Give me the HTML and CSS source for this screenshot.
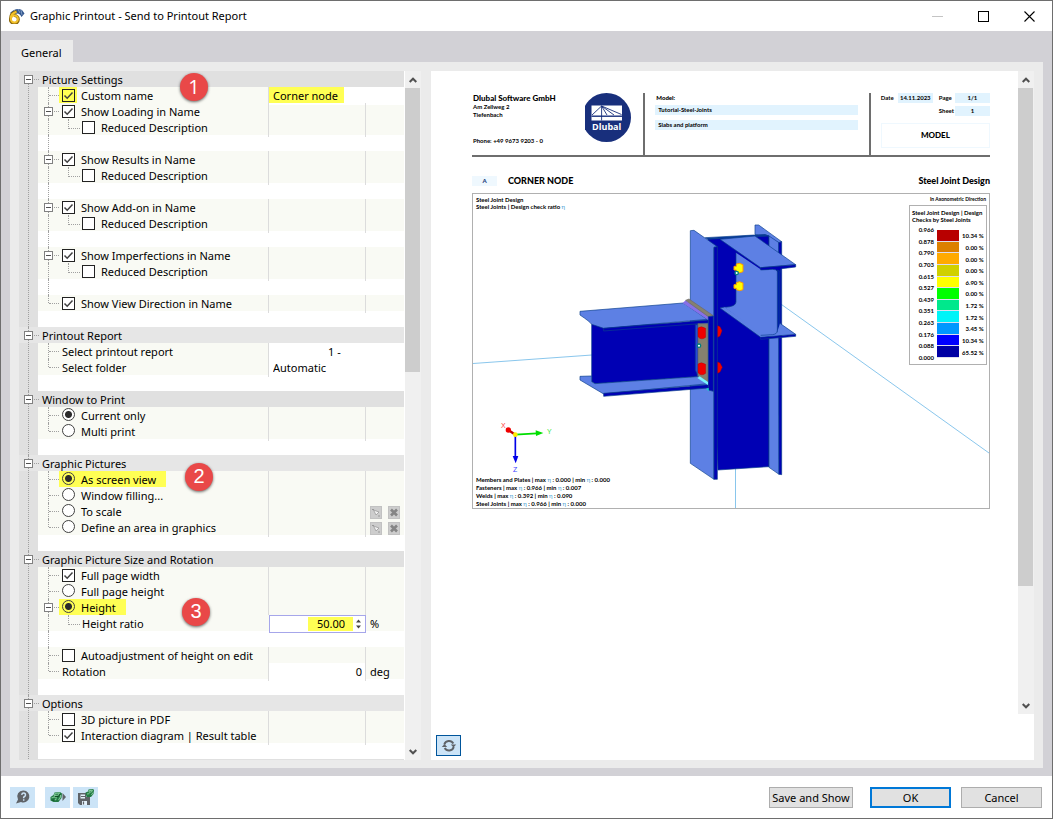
FILE: index.html
```html
<!DOCTYPE html>
<html lang="en">
<head>
<meta charset="utf-8">
<title>Graphic Printout - Send to Printout Report</title>
<link rel="stylesheet" href="styles.css">
</head>
<body>
<div class="window">
  <header class="titlebar">
    <svg class="app-icon" viewBox="0 0 16 16" aria-hidden="true">
      <path d="M1 5 Q7 -1 13 2 L15.500 5.500 L12.500 9 Q10 3 4 7 Z" fill="#33578f"/>
      <path d="M5 2 L8 5 M9 1 L11 5 M12 2 L13 7" stroke="#9db6d8" stroke-width=".7"/>
      <path d="M7.500 3.500 Q1.500 5 1.500 10.500 A4 4 0 1 0 5 7.500" fill="none" stroke="#8d6a10" stroke-width="3"/>
      <path d="M7.500 3.800 Q2 5.500 1.700 10.500" fill="none" stroke="#f4c22a" stroke-width="2"/>
      <circle cx="5.400" cy="11" r="3.500" fill="none" stroke="#f4c22a" stroke-width="2"/>
    </svg>
    <h1>Graphic Printout - Send to Printout Report</h1>
    <div class="window-buttons">
      <button type="button" aria-label="Minimize" disabled><svg viewBox="0 0 11 11"><path d="M0 5.500H11" stroke="#c4c4c4"/></svg></button>
      <button type="button" aria-label="Maximize"><svg viewBox="0 0 11 11"><rect x=".5" y=".5" width="10" height="10" fill="none" stroke="#000"/></svg></button>
      <button type="button" aria-label="Close"><svg viewBox="0 0 11 11"><path d="M.5 .5L10.500 10.500M10.500 .5L.5 10.500" stroke="#000" stroke-width="1.100"/></svg></button>
    </div>
  </header>

  <main class="workspace">
    <nav class="tabs"><button type="button" class="tab">General</button></nav>
    <div class="panel">
      <div class="tree">
        <form class="grid">
          <section class="group">
            <h2><button type="button" class="toggle" aria-label="Collapse"></button>Picture Settings</h2>
            <div class="row wide"><label class="name branch"><span class="mark box"><input type="checkbox" checked></span>Custom name<b class="badge first">1</b></label><span class="value edit"><input class="text mark" type="text" value="Corner node" aria-label="Custom name value"></span></div>
            <div class="row"><div class="name branch"><button type="button" class="toggle" aria-label="Collapse"></button><label><input type="checkbox" checked>Show Loading in Name</label></div><span class="value"></span><span class="unit"></span></div>
            <div class="row"><label class="name sub"><input type="checkbox">Reduced Description</label><span class="value"></span><span class="unit"></span></div>
            <div class="spacer line"></div>
            <div class="row"><div class="name branch"><button type="button" class="toggle" aria-label="Collapse"></button><label><input type="checkbox" checked>Show Results in Name</label></div><span class="value"></span><span class="unit"></span></div>
            <div class="row"><label class="name sub"><input type="checkbox">Reduced Description</label><span class="value"></span><span class="unit"></span></div>
            <div class="spacer line"></div>
            <div class="row"><div class="name branch"><button type="button" class="toggle" aria-label="Collapse"></button><label><input type="checkbox" checked>Show Add-on in Name</label></div><span class="value"></span><span class="unit"></span></div>
            <div class="row"><label class="name sub"><input type="checkbox">Reduced Description</label><span class="value"></span><span class="unit"></span></div>
            <div class="spacer line"></div>
            <div class="row"><div class="name branch"><button type="button" class="toggle" aria-label="Collapse"></button><label><input type="checkbox" checked>Show Imperfections in Name</label></div><span class="value"></span><span class="unit"></span></div>
            <div class="row"><label class="name sub"><input type="checkbox">Reduced Description</label><span class="value"></span><span class="unit"></span></div>
            <div class="spacer line"></div>
            <div class="row"><label class="name branch last"><input type="checkbox" checked>Show View Direction in Name</label><span class="value"></span><span class="unit"></span></div>
            <div class="spacer"></div>
          </section>

          <section class="group">
            <h2><button type="button" class="toggle" aria-label="Collapse"></button>Printout Report</h2>
            <div class="row wide"><label class="name branch" for="report">Select printout report</label><span class="value edit"><select id="report" class="report"><option>1 -</option></select></span></div>
            <div class="row wide"><label class="name branch last" for="folder">Select folder</label><span class="value edit"><select id="folder"><option>Automatic</option></select></span></div>
            <div class="spacer"></div>
          </section>

          <section class="group">
            <h2><button type="button" class="toggle" aria-label="Collapse"></button>Window to Print</h2>
            <div class="row"><label class="name branch"><input type="radio" name="window" checked>Current only</label><span class="value"></span><span class="unit"></span></div>
            <div class="row"><label class="name branch last"><input type="radio" name="window">Multi print</label><span class="value"></span><span class="unit"></span></div>
            <div class="spacer"></div>
          </section>

          <section class="group">
            <h2><button type="button" class="toggle" aria-label="Collapse"></button>Graphic Pictures</h2>
            <div class="row"><div class="name branch"><label class="mark"><input type="radio" name="picture" checked>As screen view</label><b class="badge second">2</b></div><span class="value"></span><span class="unit"></span></div>
            <div class="row"><label class="name branch"><input type="radio" name="picture">Window filling...</label><span class="value"></span><span class="unit"></span></div>
            <div class="row"><label class="name branch"><input type="radio" name="picture">To scale</label><span class="value"></span><span class="unit tools"><button type="button" aria-label="Pick" disabled><svg viewBox="0 0 12 13"><path d="M3.500 4L9 6 6 9Z" fill="#f2f2f2" stroke="#9a9a9a" stroke-width=".8"/><path d="M2 3.500H4M8 10H10" fill="none" stroke="#999"/></svg></button><button type="button" aria-label="Clear" disabled><svg viewBox="0 0 12 13"><path d="M3 3.500L9 9.500M9 3.500L3 9.500" stroke="#858585" stroke-width="2.600"/></svg></button></span></div>
            <div class="row"><label class="name branch last"><input type="radio" name="picture">Define an area in graphics</label><span class="value"></span><span class="unit tools"><button type="button" aria-label="Pick" disabled><svg viewBox="0 0 12 13"><path d="M3.500 4L9 6 6 9Z" fill="#f2f2f2" stroke="#9a9a9a" stroke-width=".8"/><path d="M2 3.500H4M8 10H10" fill="none" stroke="#999"/></svg></button><button type="button" aria-label="Clear" disabled><svg viewBox="0 0 12 13"><path d="M3 3.500L9 9.500M9 3.500L3 9.500" stroke="#858585" stroke-width="2.600"/></svg></button></span></div>
            <div class="spacer"></div>
          </section>

          <section class="group">
            <h2><button type="button" class="toggle" aria-label="Collapse"></button>Graphic Picture Size and Rotation</h2>
            <div class="row"><label class="name branch"><input type="checkbox" checked>Full page width</label><span class="value"></span><span class="unit"></span></div>
            <div class="row"><label class="name branch"><input type="radio" name="size">Full page height</label><span class="value"></span><span class="unit"></span></div>
            <div class="row"><div class="name branch"><button type="button" class="toggle" aria-label="Collapse"></button><label class="mark"><input type="radio" name="size" checked>Height</label><b class="badge third">3</b></div><span class="value"></span><span class="unit"></span></div>
            <div class="row"><label class="name sub" for="ratio">Height ratio</label><span class="value spin"><input id="ratio" class="mark" type="text" inputmode="decimal" value="50.00"><svg viewBox="0 0 5 10" aria-hidden="true"><path d="M0 3.500L2.500 .5 5 3.500ZM0 6.500L2.500 9.500 5 6.500Z" fill="#444"/></svg></span><span class="unit">%</span></div>
            <div class="spacer line"></div>
            <div class="row"><label class="name branch"><input type="checkbox">Autoadjustment of height on edit</label><span class="value"></span><span class="unit"></span></div>
            <div class="row"><label class="name branch last" for="rotation">Rotation</label><span class="value edit"><input id="rotation" class="text number" type="text" value="0"></span><span class="unit">deg</span></div>
            <div class="spacer"></div>
          </section>

          <section class="group">
            <h2><button type="button" class="toggle" aria-label="Collapse"></button>Options</h2>
            <div class="row"><label class="name branch"><input type="checkbox">3D picture in PDF</label><span class="value"></span><span class="unit"></span></div>
            <div class="row"><label class="name branch last"><input type="checkbox" checked>Interaction diagram | Result table</label><span class="value"></span><span class="unit"></span></div>
            <div class="spacer"></div>
          </section>
        </form>
        <div class="scrollbar">
          <button type="button" aria-label="Scroll up"><svg viewBox="0 0 8 6"><path d="M.7 5L4 1.700 7.300 5" fill="none" stroke="#505050" stroke-width="2"/></svg></button>
          <div class="track"><div class="thumb tree-thumb"></div></div>
          <button type="button" aria-label="Scroll down"><svg viewBox="0 0 8 6"><path d="M.7 1L4 4.300 7.300 1" fill="none" stroke="#505050" stroke-width="2"/></svg></button>
        </div>
      </div>

      <div class="preview">
        <div class="preview-view">
          <article class="page">
            <header class="page-head">
              <div class="company">
                <address><strong>Dlubal Software GmbH</strong><span>Am Zellweg 2</span><span>Tiefenbach</span><span class="phone">Phone: +49 9673 9203 - 0</span></address>
                <svg class="logo" viewBox="0 0 46 49" role="img" aria-label="Dlubal">
                  <ellipse cx="21.500" cy="24.500" rx="24.500" ry="24.500" fill="#182f7c"/>
                  <path d="M6.500 12.500H37V27.500H6.500Z" fill="#fff"/>
                  <path d="M6.500 23.200H37" stroke="#182f7c" stroke-width="1.400"/>
                  <path d="M16.600 13V27.500M16.600 13L7 22M16.600 13L22 22M16.600 13L29 22M16.600 13L36.500 21.500" stroke="#182f7c" stroke-width=".9" fill="none"/>
                  <text x="21.700" y="36.500" text-anchor="middle">Dlubal</text>
                </svg>
              </div>
              <div class="model"><strong>Model:</strong><span>Tutorial-Steel-Joints</span><span>Slabs and platform</span></div>
              <div class="meta">
                <dl><dt>Date</dt><dd>14.11.2023</dd><dt>Page</dt><dd>1/1</dd><dt class="sheet">Sheet</dt><dd>1</dd></dl>
                <strong>MODEL</strong>
              </div>
            </header>
            <div class="page-title"><span class="index">A</span><h3>CORNER NODE</h3><h3 class="right">Steel Joint Design</h3></div>
            <figure class="graphic">
              <svg class="scene" viewBox="0 0 516 314" role="img" aria-label="Steel joint, axonometric view">
                <g stroke="#7cc0ea" stroke-width=".9" fill="none"><path d="M0 169.500L119 161M305 108L516 259M262.500 274V314"/></g>
                <g transform="translate(97 16) scale(.33333)" stroke="#0a3f8c" stroke-width="2" stroke-linejoin="round">
                  <path d="M555 45H566L635 95L627 98L555 73Z" fill="#5d80e4"/>
                  <path d="M414 87L585 74 597 78V770L444 780Z" fill="#0000b4"/>
                  <path d="M597 78L627 98V793L597 772Z" fill="#5d80e4"/>
                  <path d="M626 98L635 95V794L627 793Z" fill="#0000b4"/>
                  <path d="M361 62L372 61 442 110 432 112V808L361 760Z" fill="#5d80e4"/>
                  <path d="M432 112L442 110V808H432Z" fill="#0000b4"/>
                  <path d="M406 83L555 75 585 74 597 78 414 88Z" fill="#073b9b"/>
                  <path d="M498 128L575 180 620 178V372L574 375L464 292 Q498 290 498 276Z" fill="#5d80e4" stroke="none"/>
                  <path d="M464 292Q498 290 498 276V128" fill="none"/>
                  <path d="M450 88L555 78 677 164 572 173Z" fill="#5d80e4"/>
                  <path d="M572 173L677 164V171L635 176Q630 178 630 188L622 184Q619 178 608 178L572 180Z" fill="#0000b4"/>
                  <path d="M622 180L630 184V370L622 365Z" fill="#0020a8"/>
                  <path d="M450 294L464 291 565 363 608 376 622 365 630 340 677 373 572 382Z" fill="#5d80e4" stroke="none"/>
                  <path d="M464 291L450 294 572 382M630 340L677 373M572 376L608 374Q622 372 622 362" fill="none"/>
                  <path d="M572 382L677 373V379L572 388Z" fill="#0000b4"/>
                  <path d="M65 343L382 342V500L75 521 65 515Z" fill="#0000b4"/>
                  <path d="M65 343Q60 335 30 315V304L340 279 412 328 101 355Z" fill="#5d80e4"/>
                  <path d="M101 355L415 330V339L101 363Z" fill="#0000b4"/>
                  <path d="M30 499L65 498V515L75 521 382 500 415 521 101 552 30 510Z" fill="#5d80e4"/>
                  <path d="M101 550L415 524V534L101 559Z" fill="#0000b4"/>
                  <path d="M376 344H384V498L376 480Z" fill="#2848d8"/>
                  <path d="M384 341H415V520L384 498Z" fill="#86816f" stroke="#5d6378"/>
                  <path d="M338 279L347 271 415 318V330Z" fill="#8770e8" stroke="none"/>
                  <path d="M347 271L357 267 430 317 415 320Z" fill="#86816f" stroke="#6b6868"/>
                  <path d="M415 320L430 318V544L415 540Z" fill="#0000b4"/>
                  <path d="M382 504L389 499 414 516V525Z" fill="#79f3ff" stroke="none"/>
                  <path d="M408 536L416 534V544Z" fill="#16d6cf" stroke="none"/>
                  <g fill="#f00000" stroke="#a80000" stroke-width="1">
                    <path d="M384 354Q394 346 407 355V382Q394 392 384 380Z"/><path d="M384 462Q394 454 407 463V490Q394 500 384 488Z"/>
                    <path d="M443 347L450 350 456 362 450 378 443 382Z"/><path d="M443 456L450 459 457 472 450 486 443 490Z"/>
                  </g>
                  <g fill="#ffff00" stroke="#ff9900" stroke-width="3">
                    <path d="M492 169H499V162L509 160 519 164V185L509 188 499 185V180H492Z"/><path d="M492 224H499V218L509 215 519 219V239L509 242 499 239V235H492Z"/>
                  </g>
                  <circle cx="500" cy="189" r="5" fill="#fff" stroke="#008080" stroke-width="4"/><circle cx="387" cy="407" r="5" fill="#fff" stroke="#008080" stroke-width="4"/>
                </g>
                <g transform="translate(-8 206) scale(.33333)">
                  <path d="M151 104L130 90" stroke="#b80000" stroke-width="7"/><circle cx="130" cy="90" r="8" fill="#f00000"/>
                  <path d="M151 104L215 100" stroke="#00dd00" stroke-width="5"/><path d="M212 91L235 99 213 108Z" fill="#00e000"/>
                  <path d="M151 104V170" stroke="#0000e8" stroke-width="5"/><path d="M143 168H160L152 190Z" fill="#0000e8"/>
                  <circle cx="151" cy="104" r="7" fill="#ffee00"/>
                </g>
                <g class="axes"><text x="28" y="234" fill="#ff4040">X</text><text x="74" y="240" fill="#40e840">Y</text><text x="40" y="278" fill="#4040ff">Z</text></g>
              </svg>
              <figcaption class="note top">Steel Joint Design<br>Steel Joints | Design check ratio <i>η</i></figcaption>
              <p class="note direction">In Axonometric Direction</p>
              <p class="note bottom">Members and Plates | max <i>η</i> : 0.000 | min <i>η</i> : 0.000<br>Fasteners | max <i>η</i> : 0.966 | min <i>η</i> : 0.007<br>Welds | max <i>η</i> : 0.392 | min <i>η</i> : 0.090<br>Steel Joints | max <i>η</i> : 0.966 | min <i>η</i> : 0.000</p>
              <div class="legend">
                <p>Steel Joint Design | Design<br>Checks by Steel Joints</p>
                <div class="scale">
                  <ol class="limits"><li>0.966</li><li>0.878</li><li>0.790</li><li>0.703</li><li>0.615</li><li>0.527</li><li>0.439</li><li>0.351</li><li>0.263</li><li>0.176</li><li>0.088</li><li>0.000</li></ol>
                  <div class="bars"><i class="c1"></i><i class="c2"></i><i class="c3"></i><i class="c4"></i><i class="c5"></i><i class="c6"></i><i class="c7"></i><i class="c8"></i><i class="c9"></i><i class="c10"></i><i class="c11"></i></div>
                  <ol class="shares"><li>10.34 %</li><li>0.00 %</li><li>0.00 %</li><li>0.00 %</li><li>6.90 %</li><li>0.00 %</li><li>1.72 %</li><li>1.72 %</li><li>3.45 %</li><li>10.34 %</li><li>65.52 %</li></ol>
                </div>
              </div>
            </figure>
          </article>
          <div class="scrollbar">
            <button type="button" aria-label="Scroll up"><svg viewBox="0 0 8 6"><path d="M.7 5L4 1.700 7.300 5" fill="none" stroke="#505050" stroke-width="2"/></svg></button>
            <div class="track"><div class="thumb page-thumb"></div></div>
            <button type="button" aria-label="Scroll down"><svg viewBox="0 0 8 6"><path d="M.7 1L4 4.300 7.300 1" fill="none" stroke="#505050" stroke-width="2"/></svg></button>
          </div>
        </div>
        <div class="preview-bar">
          <button type="button" class="icon-button active" aria-label="Refresh"><svg viewBox="0 0 16 16"><path d="M3.300 6.500A4.900 4.900 0 0 1 12.300 5.500M12.700 9A4.900 4.900 0 0 1 3.700 10" fill="none" stroke="#5f6368" stroke-width="2"/><path d="M9.800 6.500H15.200L12.500 9.500ZM.8 9H6.200L3.500 6Z" fill="#5f6368"/></svg></button>
        </div>
      </div>
    </div>
  </main>

  <footer class="footer">
    <button type="button" class="icon-button help" aria-label="Help"><svg viewBox="0 0 16 16"><path d="M8.500 1.500A6 6 0 1 1 6 13L1 14.500 3 10.500A6 6 0 0 1 8.500 1.500Z" fill="#5f6368"/><path d="M6.700 5.800Q7 4 8.700 4T10.500 6Q10.500 7 8.700 8.200V9.300M8.700 10.300V11.800" fill="none" stroke="#cce4f7" stroke-width="1.500"/></svg></button>
    <button type="button" class="icon-button" aria-label="Load settings"><svg viewBox="0 0 16 16"><path d="M.5 8L3.500 6 4.500 3.500 10 3 12 4.500 11.500 9 8.500 13 3.500 13 .5 11.500Z" fill="#237a43"/><path d="M5 4.500L9.500 4 8.500 6 4.500 6.500ZM1.500 9L4 8 7 8.300M5 11L6.500 9.500M8.500 11L10.500 8V6" fill="none" stroke="#7cc493" stroke-width="1.100"/><path d="M5 7.500H8.500L10 5M3 10.500V12" fill="none" stroke="#0f4422" stroke-width=".9"/><path d="M12.500 4L16 8 12.500 12Z" fill="#5f6368"/></svg></button>
    <button type="button" class="icon-button" aria-label="Save settings"><svg viewBox="0 0 16 16"><path d="M0 4H8V8H12V16H2L0 14Z" fill="#5f6368"/><path d="M2.500 5.500H7V9.500H2.500ZM4 12H9V16H4Z" fill="#e4f1fb"/><path d="M3 7.500H7M5.500 12.500V15.500" stroke="#5f6368" stroke-width="1.200"/><path d="M7.500 3.500L10 2.500 10.500 .5 15 0 16 1 15.500 5 13 8 8.500 8Z" fill="#237a43"/><path d="M11 1.700L14.500 1.200 13.500 3 11 3.200ZM9 5L11.500 4.700M13.500 6L15 3.500" fill="none" stroke="#86cc9c"/></svg></button>
    <span class="fill"></span>
    <button type="button" class="push save">Save and Show</button>
    <button type="button" class="push default">OK</button>
    <button type="button" class="push">Cancel</button>
  </footer>
</div>
</body>
</html>
```
FILE: styles.css
```css
* { box-sizing: border-box; }
body { margin: 0; font: 11px/16px "Noto Sans", "Open Sans", sans-serif; color: #000; background: #fff; }
button, input, select { font: inherit; color: inherit; margin: 0; padding: 0; border: 0; border-radius: 0; }
button { background: none; display: flex; align-items: center; justify-content: center; }
h1, h2, h3, p, ol, dl, dd, figure { margin: 0; padding: 0; font: inherit; }
ol { list-style: none; }

.window { min-height: 100vh; display: flex; flex-direction: column; border: 1px solid #6e6e6e; background: #fff; }
.titlebar { height: 30px; display: flex; align-items: center; padding-left: 8px; gap: 5px; }
.titlebar h1 { flex: 1; }
.app-icon { width: 16px; height: 16px; }
.window-buttons { display: flex; }
.window-buttons button { width: 46px; height: 28px; }
.window-buttons svg { width: 11px; height: 11px; }

.workspace { flex: 1; display: flex; flex-direction: column; background: #d2d1d6; padding: 9px 9px 8px; }
.tabs { display: flex; }
.tab { height: 22px; padding: 3px 11px 0; background: #ebebeb; }
.panel { flex: 1; display: grid; grid-template-columns: minmax(380px, 402fr) 603fr; gap: 10px; background: #ebebeb; padding: 9px 9px 8px; }

.tree { display: flex; background: #fff; min-width: 0; }
.grid { flex: 1; position: relative; padding-left: 19px; margin-right: 1px; border-bottom: 1px solid #e0e0e0; background: linear-gradient(to right, #e0e0e0 19px, #fff 19px); }
.grid::before { content: ""; position: absolute; left: 9px; top: 8px; bottom: 0; border-left: 1px dotted #a0a0a0; }
.group { position: relative; }
.group h2 { position: relative; height: 16px; padding: 1px 0 0 23px; margin-left: -19px; background: #e0e0e0; }
.group:nth-child(even) h2 { background: #e6e6e6; }
.group h2::after { content: ""; position: absolute; left: 15px; top: 8px; width: 5px; border-top: 1px dotted #a0a0a0; }
.group h2::before { content: ""; position: absolute; left: 9px; top: 0; height: 16px; border-left: 1px dotted #a0a0a0; }
.group:first-child h2::before { top: 8px; height: 8px; }
.toggle { position: absolute; left: 5px; top: 4px; width: 9px; height: 9px; border: 1px solid #808080; background: #fff; z-index: 1; }
.toggle::before { content: ""; width: 5px; height: 1px; background: #505050; }

.row { display: grid; grid-template-columns: 1fr 97px 39px; height: 16px; background: #f9faf4; }
.row.wide { grid-template-columns: 1fr 136px; }
.name { position: relative; display: flex; align-items: flex-start; padding-left: 24px; line-height: 18px; white-space: nowrap; }
.name label { display: flex; align-items: flex-start; }
.name .toggle { left: 6px; }
.name.sub { padding-left: 44px; }
.name::before, .line::before { content: ""; position: absolute; left: 10px; top: 0; height: 16px; border-left: 1px dotted #a0a0a0; }
.name.last::before { height: 8px; }
.name::after { content: ""; position: absolute; left: 11px; top: 8px; width: 10px; border-top: 1px dotted #a0a0a0; }
.name.sub::after { left: 30px; top: 0; width: 11px; height: 9px; border-top: 0; border-left: 1px dotted #a0a0a0; border-bottom: 1px dotted #a0a0a0; }
.spacer { position: relative; height: 16px; }
.value { display: flex; border-left: 1px solid #dcdcdc; min-width: 0; }
.value.edit { background: #fff; }
.unit { border-left: 1px solid #dcdcdc; padding: 1px 0 0 4px; }

input[type="checkbox"], input[type="radio"] { appearance: none; flex: none; width: 13px; height: 13px; margin: 2px 6px 0 0; border: 1px solid #222; background: #fff; }
input[type="checkbox"]:checked { background: #fff url("data:image/svg+xml,%3Csvg xmlns='http://www.w3.org/2000/svg' viewBox='0 0 11 11'%3E%3Cpath d='M1.500 5.500L4.200 8.200L9.500 2.500' fill='none' stroke='%23404040' stroke-width='1.500'/%3E%3C/svg%3E"); }
input[type="radio"] { margin-top: 1px; border-radius: 50%; border-color: #404040; }
input[type="radio"]:checked { background: radial-gradient(circle, #2b2b2b 3px, transparent 4px) #fff; }
.mark { background-color: #ffff54; }
.mark input[type="checkbox"], .mark input[type="radio"] { background-color: transparent; }
.name .mark { height: 16px; margin-left: -3px; padding: 0 10px 0 3px; }
.name .mark.box { display: flex; padding: 0 2px 0 3px; margin-right: 4px; }
.mark.box input[type="checkbox"] { margin-right: 0; }

.text { width: 75px; height: 16px; padding: 1px 0 0 4px; }
.text.number { width: 100%; padding-right: 3px; text-align: right; background: #fff; }
select { appearance: none; width: 100%; height: 16px; padding: 1px 0 0 4px; background: #fff; }
select.report { padding-left: 59px; }
.spin { margin: 0 -1px 0 1px; border: 1px solid #a6a6ea; background: #fff; align-items: center; justify-content: flex-end; position: relative; }
.spin input { width: 45px; height: 14px; padding-right: 8px; text-align: right; }
.spin svg { width: 5px; height: 10px; margin: 0 4px 0 3px; }
.spin + .unit { border-left-color: transparent; }
.tools { display: flex; align-items: center; gap: 6px; padding-top: 0; }
.tools button { width: 12px; height: 13px; background: #cdcdcd; outline: 1px solid #c2c2c2; outline-offset: -1px; }
.tools svg { width: 12px; height: 13px; }

.badge { position: absolute; z-index: 2; width: 28px; height: 28px; border-radius: 50%; background: #e94848; box-shadow: 0 1px 3px rgba(0, 0, 0, .6); color: #fff; font: 20px/27px "Open Sans", sans-serif; text-align: center; }
.badge.first { left: 142px; top: -14px; }
.badge.second { left: 147px; top: -8px; font-family: "Liberation Sans", sans-serif; }
.badge.third { left: 144px; top: -1px; font-family: "Liberation Sans", sans-serif; }

.scrollbar { width: 16px; flex: none; display: flex; flex-direction: column; background: #f0f0f0; }
.scrollbar button { width: 15px; height: 17px; }
.scrollbar svg { width: 8px; height: 6px; }
.track { flex: 1; }
.thumb { width: 15px; background: #cdcdcd; }
.tree-thumb { height: 43.4%; }
.page-thumb { height: 81.8%; }

.preview { background: #fff; display: flex; flex-direction: column; min-width: 0; }
.preview-view { flex: 1; display: flex; }
.page { flex: 1; min-width: 0; padding: 22px 28px 0 41px; font: bold 6px/8px Lato, sans-serif; }
.page-head { display: grid; grid-template-columns: 171fr 225fr 121fr; height: 64px; border-bottom: 2px solid #6e6e6e; }
.company { display: flex; justify-content: space-between; padding-right: 12px; }
.company address { display: flex; flex-direction: column; font-style: normal; padding: 1px 0 0 1px; white-space: nowrap; }
.company strong { font-size: 8px; line-height: 9px; }
.company .phone { padding-top: 18px; }
.logo { width: 46px; height: 49px; }
.logo text { font: bold 9px "Open Sans", sans-serif; fill: #fff; }
.model { display: flex; flex-direction: column; border-left: 2px solid #6e6e6e; padding: 1px 11px 0 10px; }
.model strong { padding-left: 1px; margin-bottom: 3px; }
.model span { height: 10px; line-height: 10px; padding-left: 3px; margin-bottom: 5px; background: #e1f3fe; }
.meta { border-left: 2px solid #6e6e6e; padding-left: 10px; }
.meta dl { display: grid; grid-template-columns: 17px 35px 22px 1fr; row-gap: 3px; text-align: center; line-height: 10px; }
.meta dt { text-align: left; }
.meta dt:nth-of-type(2), .meta dt.sheet { padding-left: 6px; }
.meta dt.sheet { grid-column: 3; }
.meta dd { background: #e1f3fe; }
.meta strong { display: block; margin-top: 7px; border: 1px solid #eff8fe; text-align: center; font-size: 8px; font-weight: 900; line-height: 23px; }
.page-title { display: flex; align-items: center; height: 36px; padding-top: 12px; font-size: 9px; font-weight: 900; }
.page-title .index { width: 25px; line-height: 10px; text-align: center; background: #eff8fe; color: #26427c; font-size: 6px; margin-right: 11px; }
.page-title h3 { line-height: 12px; }
.page-title .right { margin-left: auto; }
.graphic { position: relative; border: 1px solid #b0b0b0; }
.scene { display: block; width: 100%; height: auto; }
.axes { font: 7px "Liberation Sans", sans-serif; }
.note { position: absolute; line-height: 7px; white-space: nowrap; }
.note i { font-weight: normal; font-style: normal; color: #3a9ad0; }
.note.top { left: 3px; top: 2px; }
.note.direction { right: 3px; top: 2px; font-size: 5px; }
.note.bottom { left: 3px; bottom: 0; line-height: 8px; }
.legend { position: absolute; right: 2px; top: 11px; width: 78px; height: 160px; padding: 3px 3px 0 2px; border: 1px solid #b0b0b0; background: #fff; line-height: 7px; white-space: nowrap; }
.scale { display: grid; grid-template-columns: 22px 22px 1fr; column-gap: 3px; margin-top: 3px; }
.scale ol { display: flex; flex-direction: column; text-align: right; }
.limits { height: 135px; justify-content: space-between; }
.bars, .scale .shares { height: 128px; margin-top: 4px; display: flex; flex-direction: column; }
.bars i { flex: 1; border-bottom: 1px solid #dde; }
.shares { justify-content: space-around; }
.c1 { background: #b80000; } .c2 { background: #dc8000; } .c3 { background: #ffaa00; } .c4 { background: #d0d000; }
.c5 { background: #ffff00; } .c6 { background: #00ff00; } .c7 { background: #00e88c; } .c8 { background: #00f4f8; }
.c9 { background: #0098ff; } .c10 { background: #0000ff; } .c11 { background: #0000a4; }
.preview-bar { padding: 21px 5px 4px; }

.icon-button { width: 25px; height: 21px; background: #cce4f7; }
.icon-button svg { width: 16px; height: 16px; }
.icon-button.active { border: 1px solid #00559b; }
.icon-button.help { margin-right: 7px; }
.footer { height: 42px; display: flex; align-items: center; gap: 3px; padding: 0 10px 0 9px; }
.fill { flex: 1; }
.push { width: 81px; height: 21px; padding-top: 1px; background: #e1e1e1; border: 1px solid #adadad; margin-left: 7px; }
.push.save { width: 84px; margin-right: 7px; white-space: nowrap; }
.push.default { border: 2px solid #0078d7; }
```
